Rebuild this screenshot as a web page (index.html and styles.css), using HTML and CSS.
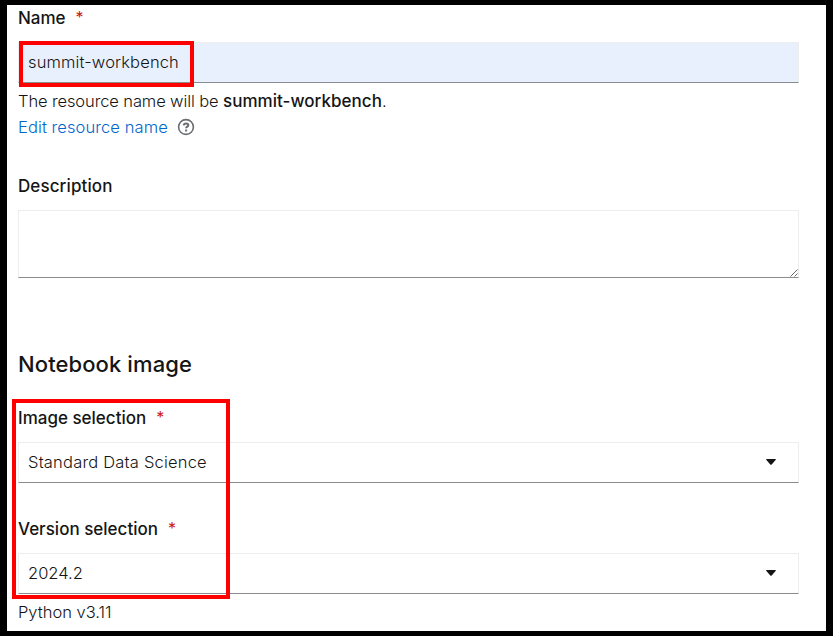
FILE: index.html
```
<!DOCTYPE html>
<html lang="en">
<head>
<meta charset="utf-8">
<title>Create workbench</title>
<link rel="stylesheet" href="styles.css">
</head>
<body>
<main class="page">
  <section class="group name-group">
    <label class="label">Name <span class="required">*</span></label>
    <div class="control filled"><span class="value name-value">summit-workbench</span></div>
    <p class="helper"><span class="lead">The resource name will be </span><strong>summit-workbench</strong>.</p>
    <div class="edit"><a class="link">Edit resource name</a>
      <svg class="help" viewBox="0 0 18 18"><circle cx="9" cy="9" r="7.4"/><path class="hook" d="M6.7 7.3C6.9 5.9 7.8 5.4 9 5.4c1.3 0 2.3.7 2.3 1.8 0 1.5-2.1 1.4-2.1 3M9.1 11.6v1.8"/></svg>
    </div>
  </section>
  <section class="group description-group">
    <label class="label description">Description</label>
    <div class="control area"><svg class="grip" viewBox="0 0 8 8"><path d="M.5 7.5l7-7M4.5 7.5l3-3"/></svg></div>
  </section>
  <h2 class="heading">Notebook image</h2>
  <section class="group image-group">
    <label class="label">Image selection <span class="required">*</span></label>
    <div class="control"><span class="value image-value">Standard Data Science</span><svg class="caret" viewBox="0 0 10 6"><path d="M.7 0h8.6q1 .3.3 1.1L5.7 5.4q-.7.8-1.4 0L.4 1.1Q-.3.3.7 0z"/></svg></div>
  </section>
  <section class="group version-group">
    <label class="label">Version selection <span class="required">*</span></label>
    <div class="control"><span class="value">2024.2</span><svg class="caret" viewBox="0 0 10 6"><path d="M.7 0h8.6q1 .3.3 1.1L5.7 5.4q-.7.8-1.4 0L.4 1.1Q-.3.3.7 0z"/></svg></div>
    <p class="helper">Python v3.11</p>
  </section>
  <div class="mark mark-name"></div>
  <div class="mark mark-image"></div>
</main>
</body>
</html>
```
FILE: styles.css
```
* { box-sizing: border-box; }
body {
  margin: 0;
  height: 636px;
  overflow: hidden;
  background: #000;
  padding: 5px 7px;
  font-family: Inter, "Liberation Sans", sans-serif;
  font-size: 16.5px;
  font-weight: 300;
  color: #151515;
}
.page {
  height: 626px;
  background: #fff;
  padding: 0 27px 0 11px;
}
.group { display: flex; flex-direction: column; }
.label {
  display: flex;
  gap: 10px;
  height: 26px;
  line-height: 26px;
  margin-bottom: 11px;
  font-size: 17px;
  font-weight: 500;
  white-space: nowrap;
}
.description { letter-spacing: .1px; }
.required { color: #c9190b; font-size: 16px; font-weight: 400; line-height: 25px; }
.control {
  display: flex;
  align-items: center;
  justify-content: space-between;
  height: 41px;
  padding: 0 21px 1px 9px;
  border: 1px solid #ededed;
  border-bottom-color: #8a8d90;
}
.filled { background: #e8f0fe; }
.name-value { letter-spacing: .13px; }
.image-value { letter-spacing: .2px; }
.helper { margin: 5px 0 0; height: 26px; line-height: 26px; white-space: pre; }
.lead { letter-spacing: -.11px; }
.helper strong { font-size: 17px; font-weight: 500; letter-spacing: .03px; }
.edit { display: flex; align-items: center; gap: 9px; height: 26px; }
.link { color: #06c; letter-spacing: .09px; }
.help { width: 18px; height: 18px; fill: none; stroke: #6a6e73; stroke-width: 1.6; }
.hook { stroke-width: 2; }
.name-group { height: 168px; }
.area { height: 68px; align-items: flex-end; justify-content: flex-end; padding: 0; }
.grip { width: 8px; height: 8px; fill: none; stroke: #555; stroke-width: .9; }
.heading {
  margin: 70px 0 24px;
  height: 33px;
  line-height: 33px;
  font-size: 22px;
  font-weight: 500;
  letter-spacing: .1px;
}
.caret { width: 12px; height: 6px; fill: #151515; }
.image-group { height: 111px; }
.mark { position: absolute; border: 4px solid #f00; }
.mark-name { left: 19px; top: 41px; width: 175px; height: 46px; }
.mark-image { left: 12px; top: 399px; width: 218px; height: 200px; }
```
